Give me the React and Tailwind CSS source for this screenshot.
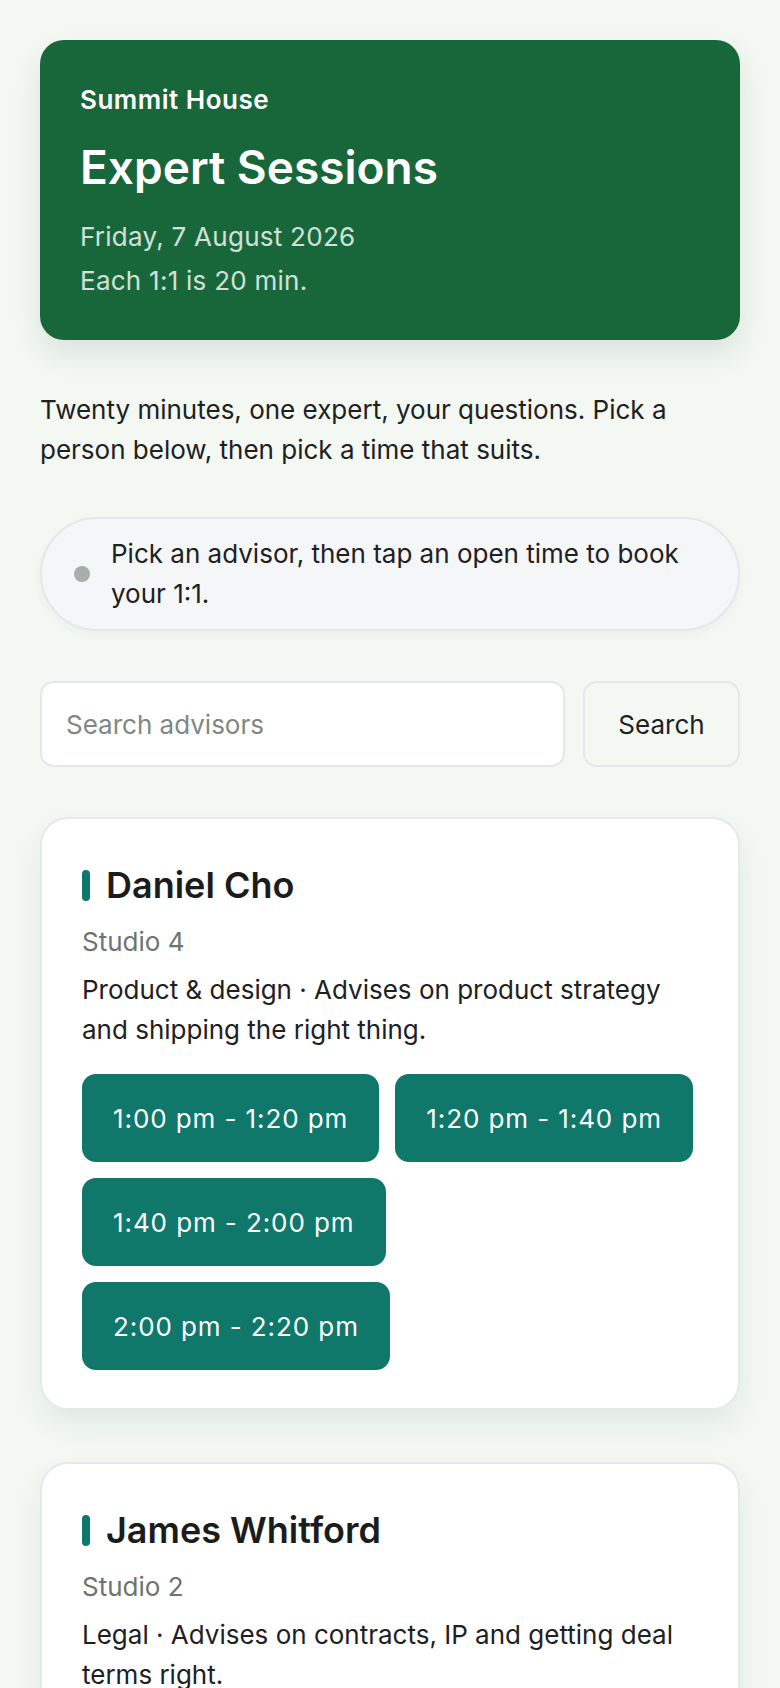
import React from "react"

const advisors = [
    {
        name: "Daniel Cho",
        room: "Studio 4",
        blurb: "Product & design · Advises on product strategy and shipping the right thing.",
        slots: ["1:00 pm - 1:20 pm", "1:20 pm - 1:40 pm", "1:40 pm - 2:00 pm", "2:00 pm - 2:20 pm"],
    },
    {
        name: "James Whitford",
        room: "Studio 2",
        blurb: "Legal · Advises on contracts, IP and getting deal terms right.",
        slots: ["2:20 pm - 2:40 pm", "2:40 pm - 3:00 pm", "3:00 pm - 3:20 pm"],
    },
]

const AdvisorCard = ({ advisor, className }) => {
    return (
        <div className={"rounded-[28px] border-2 border-[#e4e9ec] bg-white px-10 pt-[44px] pb-[38px] shadow-[0_14px_30px_rgba(20,40,30,0.07)] " + className}>
            <div className="flex items-center gap-4">
                <span className="block w-2 h-[31px] rounded-full bg-[#0f786c]"></span>
                <h2 className="text-[36px] leading-[44px] font-semibold text-[#1b1d1c]">{advisor.name}</h2>
            </div>
            <p className="mt-[15px] text-[26px] leading-[40px] text-[#6b7470]">{advisor.room}</p>
            <p className="mt-2 text-[26px] leading-[40px] text-[#1d211f]">{advisor.blurb}</p>
            <div className="mt-6 flex flex-wrap gap-4">
                {advisor.slots.map((slot) => (
                    <button
                        key={slot}
                        className="h-[88px] px-[31px] rounded-[14px] bg-[#10776b] text-white text-[26px] tracking-[0.035em] flex items-center"
                    >
                        {slot}
                    </button>
                ))}
            </div>
        </div>
    )
}

const App = () => {
    return (
        <div className="min-h-screen bg-[#f3f8f3] px-10 pt-10 pb-16 font-['Inter',sans-serif]">
            {/* header */}
            <div className="rounded-3xl bg-[#17673a] px-10 pt-[44px] pb-[37px] shadow-[0_14px_30px_rgba(20,40,30,0.10)]">
                <p className="text-[26px] leading-[32px] font-semibold tracking-[0.02em] text-white">Summit House</p>
                <h1 className="mt-[23px] text-[46px] leading-[56px] font-semibold text-white">Expert Sessions</h1>
                <div className="mt-5 text-[26px] leading-[44px] tracking-[0.01em] text-white/80">
                    <p>Friday, 7 August 2026</p>
                    <p>Each 1:1 is 20 min.</p>
                </div>
            </div>

            <p className="mt-[50px] text-[26px] leading-[40px] text-[#1d211f]">
                Twenty minutes, one expert, your questions. Pick a person below, then pick a time that suits.
            </p>

            {/* hint pill */}
            <div className="mt-[47px] flex items-center gap-[21px] rounded-full border-2 border-[#e3e8eb] bg-[#f5f6f8] pl-8 pr-[30px] py-[15px] shadow-[0_4px_10px_rgba(20,40,30,0.04)]">
                <span className="block shrink-0 w-4 h-4 rounded-full bg-[#a6b0ab]"></span>
                <p className="text-[26px] leading-[40px] text-[#1d211f]">Pick an advisor, then tap an open time to book your 1:1.</p>
            </div>

            {/* search */}
            <div className="mt-[50px] flex gap-[18px]">
                <input
                    type="text"
                    placeholder="Search advisors"
                    className="flex-1 min-w-0 h-[86px] rounded-[14px] border-2 border-[#e3e8eb] bg-white px-6 text-[26px] text-[#1d211f] placeholder:text-[#7f8784] outline-none"
                />
                <button className="w-[157px] h-[86px] rounded-[14px] border-2 border-[#e3e8eb] bg-[#f3f8f3] text-[26px] text-[#1d211f]">
                    Search
                </button>
            </div>

            <AdvisorCard advisor={advisors[0]} className="mt-[50px]" />
            <AdvisorCard advisor={advisors[1]} className="mt-[52px]" />
        </div>
    )
}

export default App
